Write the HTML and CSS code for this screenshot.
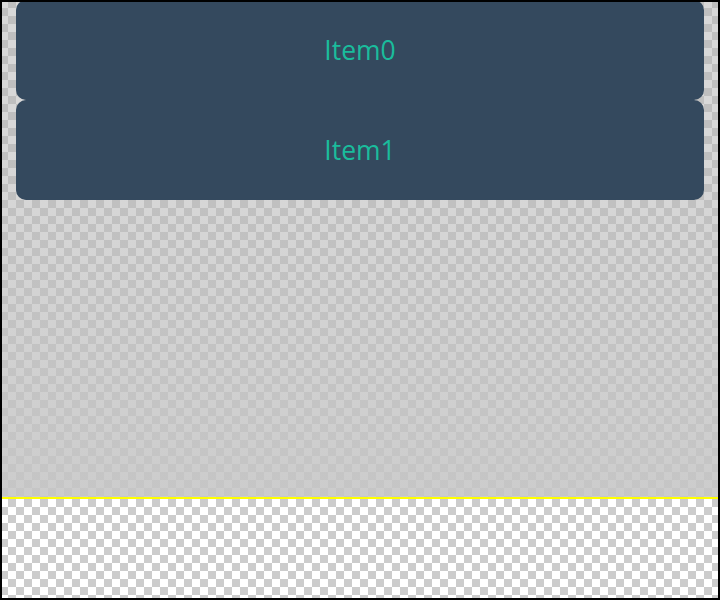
FILE: index.html
```html
<!DOCTYPE html>
<html>
<head>
<meta charset="utf-8">
<link rel="stylesheet" href="styles.css">
</head>
<body>
<div class="frame">
  <div class="upper">
    <div class="list">
      <div class="card">Item0</div>
      <div class="card">Item1</div>
    </div>
  </div>
  <div class="divider"></div>
  <div class="lower"></div>
</div>
</body>
</html>
```

FILE: styles.css
```css
html, body {
  margin: 0;
  padding: 0;
  width: 720px;
  height: 600px;
  overflow: hidden;
}
.frame {
  position: relative;
  width: 720px;
  height: 600px;
  display: flex;
  flex-direction: column;
  font-family: "Open Sans", "Noto Sans", sans-serif;
}
.frame::after {
  content: "";
  position: absolute;
  inset: 0;
  border: 2px solid #000;
  pointer-events: none;
}
.upper {
  height: 497px;
  background-color: #d8d8d8;
  background-image:
    linear-gradient(to bottom, rgba(200,200,200,0) 30%, rgba(200,200,200,0.75) 100%),
    linear-gradient(45deg, #bfbfbf 25%, transparent 25%, transparent 75%, #bfbfbf 75%),
    linear-gradient(45deg, #bfbfbf 25%, transparent 25%, transparent 75%, #bfbfbf 75%);
  background-size: 100% 100%, 16px 16px, 16px 16px;
  background-position: 0 0, 0 0, 8px 8px;
  padding: 0 16px;
}
.list {
  display: flex;
  flex-direction: column;
}
.card {
  height: 100px;
  background: #34495e;
  border-radius: 10px;
  color: #1abc9c;
  font-size: 26.5px;
  display: flex;
  align-items: center;
  justify-content: center;
}
.divider {
  height: 2px;
  background: #ffff00;
}
.lower {
  flex: 1;
  background-color: #ffffff;
  background-image:
    linear-gradient(45deg, #cccccc 25%, transparent 25%, transparent 75%, #cccccc 75%),
    linear-gradient(45deg, #cccccc 25%, transparent 25%, transparent 75%, #cccccc 75%);
  background-size: 16px 16px, 16px 16px;
  background-position: 0 0, 8px 8px;
}
```
